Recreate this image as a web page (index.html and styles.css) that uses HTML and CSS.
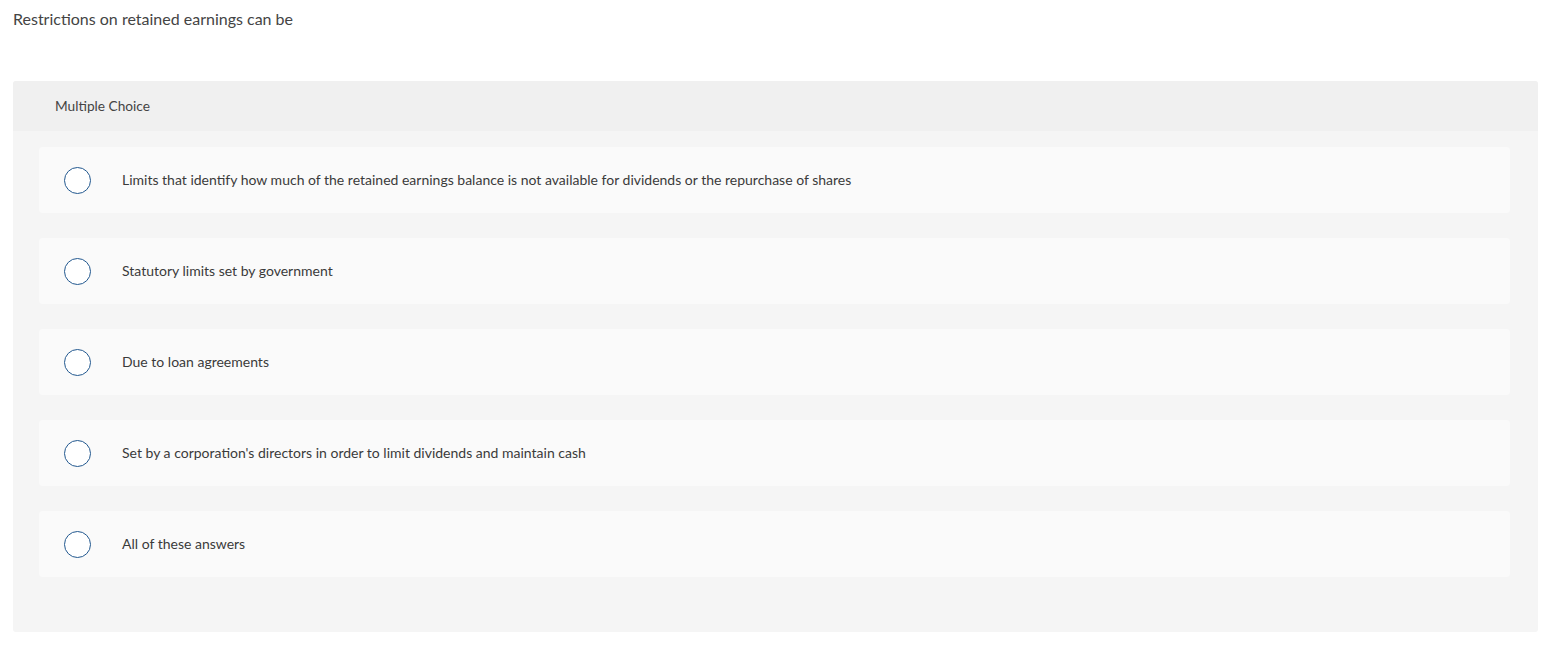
FILE: index.html
```html
<!DOCTYPE html>
<html lang="en">
<head>
  <meta charset="UTF-8">
  <title>Multiple Choice</title>
  <link rel="stylesheet" href="styles.css">
</head>
<body>

  <p class="prompt">Restrictions on retained earnings can be</p>

  <div class="question">
    <div class="question-head">Multiple Choice</div>
    <div class="choices">
      <label class="choice"><span class="radio"></span><span class="choice-text">Limits that identify how much of the retained earnings balance is not available for dividends or the repurchase of shares</span></label>
      <label class="choice"><span class="radio"></span><span class="choice-text">Statutory limits set by government</span></label>
      <label class="choice"><span class="radio"></span><span class="choice-text">Due to loan agreements</span></label>
      <label class="choice"><span class="radio"></span><span class="choice-text">Set by a corporation's directors in order to limit dividends and maintain cash</span></label>
      <label class="choice"><span class="radio"></span><span class="choice-text">All of these answers</span></label>
    </div>
  </div>

</body>
</html>
```

FILE: styles.css
```css
body { font-family: Lato, "Open Sans", sans-serif; color: #333; background: #fff; margin: 0; padding: 0 19px 0 13px; }
.prompt { margin: 0; height: 81px; padding-top: 10px; box-sizing: border-box; font-size: 16px; line-height: 18px; color: #444; }
.question { background-color: #f5f5f5; border-radius: 3px; padding-bottom: 55px; }
.question-head { background-color: #f0f0f0; height: 50px; line-height: 50px; padding-left: 42px; font-size: 13.7px; color: #444; border-radius: 3px 3px 0 0; }
.choices { display: flex; flex-direction: column; gap: 25px; padding: 16px 28px 0 26px; }
.choice { display: flex; align-items: center; height: 66px; padding-left: 25px; background-color: #fafafa; border-radius: 4px; font-size: 14px; color: #3a3a3a; cursor: pointer; }
.choice-text { margin-top: -2px; }
.radio { width: 25px; height: 25px; border: 1.5px solid #22588f; border-radius: 50%; background: #fff; flex-shrink: 0; margin-right: 31px; }
```
